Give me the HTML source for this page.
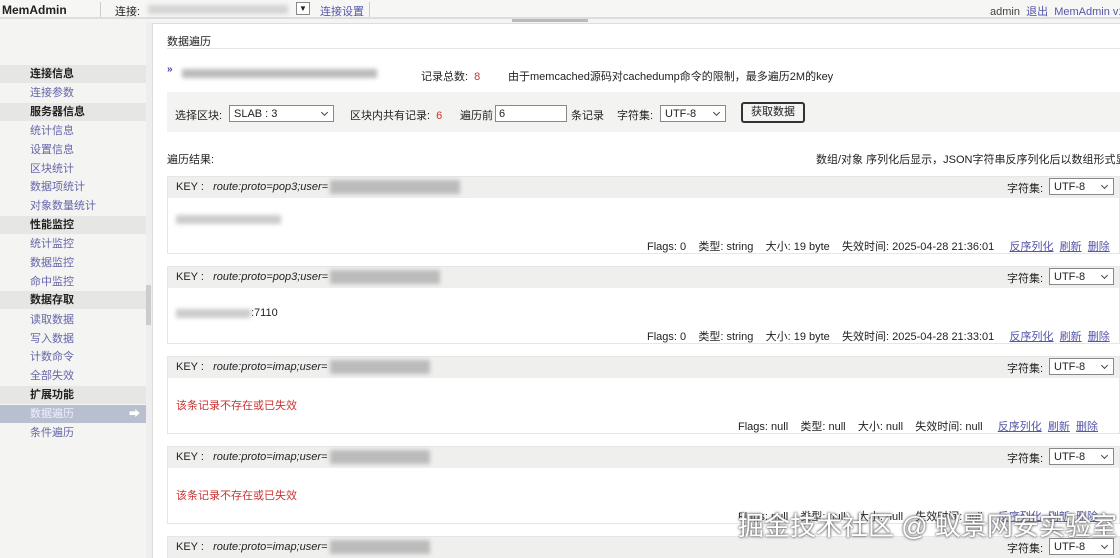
<!DOCTYPE html>
<html style="overflow:hidden;width:1120px;height:558px"><head><meta charset="utf-8"><style>
*{margin:0;padding:0;box-sizing:border-box}
body{width:1120px;height:558px;overflow:hidden;background:#f4f4f2;font-family:"Liberation Sans","Noto Sans CJK SC",sans-serif;font-size:11px;color:#222;position:relative}
.a{position:absolute;white-space:nowrap}
.lnk{color:#55a}
.red{color:#c33}
.blur{background:#ccc;filter:blur(2px);height:9px}
.side div{position:absolute;left:0;width:146px;height:18px;line-height:18px;padding-left:30px;font-size:11px}
.side .h{background:#e6e6e4;font-weight:bold;color:#222}
.side .l{color:#66a}
.sel{border:1px solid #888;background:#fff;height:17px;font-size:11px;line-height:16px;padding-left:4px}
.sel:after{content:"";position:absolute;right:6px;top:4px;width:4px;height:4px;border-right:1px solid #444;border-bottom:1px solid #444;transform:rotate(45deg)}
.card{position:absolute;left:167px;width:953px;height:78px;background:#fff;border:1px solid #e6e6e6}
.card .hd{position:absolute;left:0;top:0;right:0;height:21px;background:#efefed;line-height:21px;padding-left:8px;font-size:11px}
</style></head><body>
<div class="a" style="left:0;top:0;width:1120px;height:19px;background:#f6f6f4;border-bottom:2px solid #ddd"></div>
<div class="a" style="left:2px;top:3px;font-weight:bold;font-size:12px">MemAdmin</div>
<div class="a" style="left:100px;top:2px;width:1px;height:15px;background:#ccc"></div>
<div class="a" style="left:115px;top:3px">连接:</div>
<div class="a blur" style="left:148px;top:5px;width:140px;background:#d4d4d4"></div>
<div class="a" style="left:296px;top:2px;width:14px;height:13px;border:1px solid #888;background:#fff;font-size:8px;text-align:center;line-height:11px">▼</div>
<div class="a lnk" style="left:320px;top:3px">连接设置</div>
<div class="a" style="left:369px;top:2px;width:1px;height:15px;background:#ccc"></div>
<div class="a" style="left:990px;top:3px;color:#444">admin <span class="lnk">&nbsp;退出&nbsp; MemAdmin v1</span></div>
<div class="a" style="left:512px;top:19px;width:76px;height:3px;background:#bbb"></div>
<div class="side">
<div class="h" style="top:65px">连接信息</div><div class="l" style="top:84px">连接参数</div>
<div class="h" style="top:103px">服务器信息</div><div class="l" style="top:122px">统计信息</div>
<div class="l" style="top:141px">设置信息</div><div class="l" style="top:160px">区块统计</div>
<div class="l" style="top:178px">数据项统计</div><div class="l" style="top:197px">对象数量统计</div>
<div class="h" style="top:216px">性能监控</div><div class="l" style="top:235px">统计监控</div>
<div class="l" style="top:254px">数据监控</div><div class="l" style="top:273px">命中监控</div>
<div class="h" style="top:291px">数据存取</div><div class="l" style="top:311px">读取数据</div>
<div class="l" style="top:330px">写入数据</div><div class="l" style="top:348px">计数命令</div>
<div class="l" style="top:367px">全部失效</div><div class="h" style="top:386px">扩展功能</div>
<div class="l" style="top:405px;background:#b8c0d0;color:#eef">数据遍历<span style="position:absolute;right:6px;color:#fff">➡</span></div>
<div class="l" style="top:424px">条件遍历</div>
</div>
<div class="a" style="left:146px;top:22px;width:6px;height:536px;background:#eee"></div>
<div class="a" style="left:146px;top:285px;width:5px;height:40px;background:#ccc"></div>
<div class="a" style="left:152px;top:23px;width:968px;height:535px;background:#fff;border-left:1px solid #ddd;border-top:1px solid #ddd"></div>
<div class="a" style="left:167px;top:33px">数据遍历</div>
<div class="a" style="left:167px;top:48px;width:953px;height:1px;background:#e6e6e6"></div>
<div class="a" style="left:167px;top:64px;color:#44a;font-weight:bold;font-size:10px">»</div>
<div class="a blur" style="left:182px;top:69px;width:195px;background:#bbb"></div>
<div class="a" style="left:421px;top:68px">记录总数: <span class="red">&nbsp;8</span></div>
<div class="a" style="left:508px;top:68px">由于memcached源码对cachedump命令的限制，最多遍历2M的key</div>
<div class="a" style="left:167px;top:92px;width:953px;height:40px;background:#f3f3f1"></div>
<div class="a" style="left:175px;top:107px">选择区块:</div>
<div class="a sel" style="left:229px;top:105px;width:105px">SLAB : 3</div>
<div class="a" style="left:350px;top:107px">区块内共有记录: <span class="red">&nbsp;6</span></div>
<div class="a" style="left:460px;top:107px">遍历前</div>
<div class="a" style="left:495px;top:105px;width:72px;height:17px;border:1px solid #888;background:#fff;padding-left:3px;line-height:16px">6</div>
<div class="a" style="left:571px;top:107px">条记录</div>
<div class="a" style="left:617px;top:107px">字符集:</div>
<div class="a sel" style="left:660px;top:105px;width:66px">UTF-8</div>
<div class="a" style="left:741px;top:102px;width:64px;height:21px;border:2px solid #333;border-radius:3px;background:#f4f4f4;text-align:center;line-height:17px">获取数据</div>
<div class="a" style="left:167px;top:151px">遍历结果:</div>
<div class="a" style="left:816px;top:151px">数组/对象 序列化后显示，JSON字符串反序列化后以数组形式显示</div>

<div class="card" style="top:176px"><div class="hd">KEY : &nbsp;&nbsp;<i>route:proto=pop3;user=</i></div>
<div class="a blur" style="left:8px;top:38px;width:105px"></div>
<div class="a" style="left:479px;top:61px">Flags: 0 &nbsp;&nbsp;&nbsp;类型: string &nbsp;&nbsp;&nbsp;大小: 19 byte &nbsp;&nbsp;&nbsp;失效时间: 2025-04-28 21:36:01 &nbsp;&nbsp;&nbsp;&nbsp;<u class="lnk">反序列化</u> &nbsp;<u class="lnk">刷新</u> &nbsp;<u class="lnk">删除</u></div></div>
<div class="card" style="top:266px"><div class="hd">KEY : &nbsp;&nbsp;<i>route:proto=pop3;user=</i></div>
<div class="a" style="left:8px;top:40px"><span class="blur" style="display:inline-block;width:75px;vertical-align:middle"></span>:7110</div>
<div class="a" style="left:479px;top:61px">Flags: 0 &nbsp;&nbsp;&nbsp;类型: string &nbsp;&nbsp;&nbsp;大小: 19 byte &nbsp;&nbsp;&nbsp;失效时间: 2025-04-28 21:33:01 &nbsp;&nbsp;&nbsp;&nbsp;<u class="lnk">反序列化</u> &nbsp;<u class="lnk">刷新</u> &nbsp;<u class="lnk">删除</u></div></div>
<div class="card" style="top:356px"><div class="hd">KEY : &nbsp;&nbsp;<i>route:proto=imap;user=</i></div>
<div class="a red" style="left:8px;top:40px">该条记录不存在或已失效</div>
<div class="a" style="left:570px;top:61px">Flags: null &nbsp;&nbsp;&nbsp;类型: null &nbsp;&nbsp;&nbsp;大小: null &nbsp;&nbsp;&nbsp;失效时间: null &nbsp;&nbsp;&nbsp;&nbsp;<u class="lnk">反序列化</u> &nbsp;<u class="lnk">刷新</u> &nbsp;<u class="lnk">删除</u></div></div>
<div class="card" style="top:446px"><div class="hd">KEY : &nbsp;&nbsp;<i>route:proto=imap;user=</i></div>
<div class="a red" style="left:8px;top:40px">该条记录不存在或已失效</div>
<div class="a" style="left:570px;top:61px">Flags: null &nbsp;&nbsp;&nbsp;类型: null &nbsp;&nbsp;&nbsp;大小: null &nbsp;&nbsp;&nbsp;失效时间: null &nbsp;&nbsp;&nbsp;&nbsp;<u class="lnk">反序列化</u> &nbsp;<u class="lnk">刷新</u> &nbsp;<u class="lnk">删除</u></div></div>
<div class="card" style="top:536px;height:22px"><div class="hd">KEY : &nbsp;&nbsp;<i>route:proto=imap;user=</i></div></div>

<div class="a" style="left:1007px;top:180px">字符集:</div><div class="a sel" style="left:1049px;top:178px;width:65px">UTF-8</div>
<div class="a" style="left:1007px;top:270px">字符集:</div><div class="a sel" style="left:1049px;top:268px;width:65px">UTF-8</div>
<div class="a" style="left:1007px;top:360px">字符集:</div><div class="a sel" style="left:1049px;top:358px;width:65px">UTF-8</div>
<div class="a" style="left:1007px;top:450px">字符集:</div><div class="a sel" style="left:1049px;top:448px;width:65px">UTF-8</div>
<div class="a" style="left:1007px;top:540px">字符集:</div><div class="a sel" style="left:1049px;top:538px;width:65px">UTF-8</div>

<div class="a blur" style="left:330px;top:180px;width:130px;height:14px;background:#bbb"></div>
<div class="a blur" style="left:330px;top:270px;width:110px;height:14px;background:#bbb"></div>
<div class="a blur" style="left:330px;top:360px;width:100px;height:14px;background:#bbb"></div>
<div class="a blur" style="left:330px;top:450px;width:100px;height:14px;background:#bbb"></div>
<div class="a blur" style="left:330px;top:540px;width:100px;height:14px;background:#bbb"></div>

<div class="a" style="left:738px;top:506px;font-size:26px;color:#fff;text-shadow:0 0 2px #555,0 0 3px #777">掘金技术社区 @ 蚁景网安实验室</div>
</body></html>
